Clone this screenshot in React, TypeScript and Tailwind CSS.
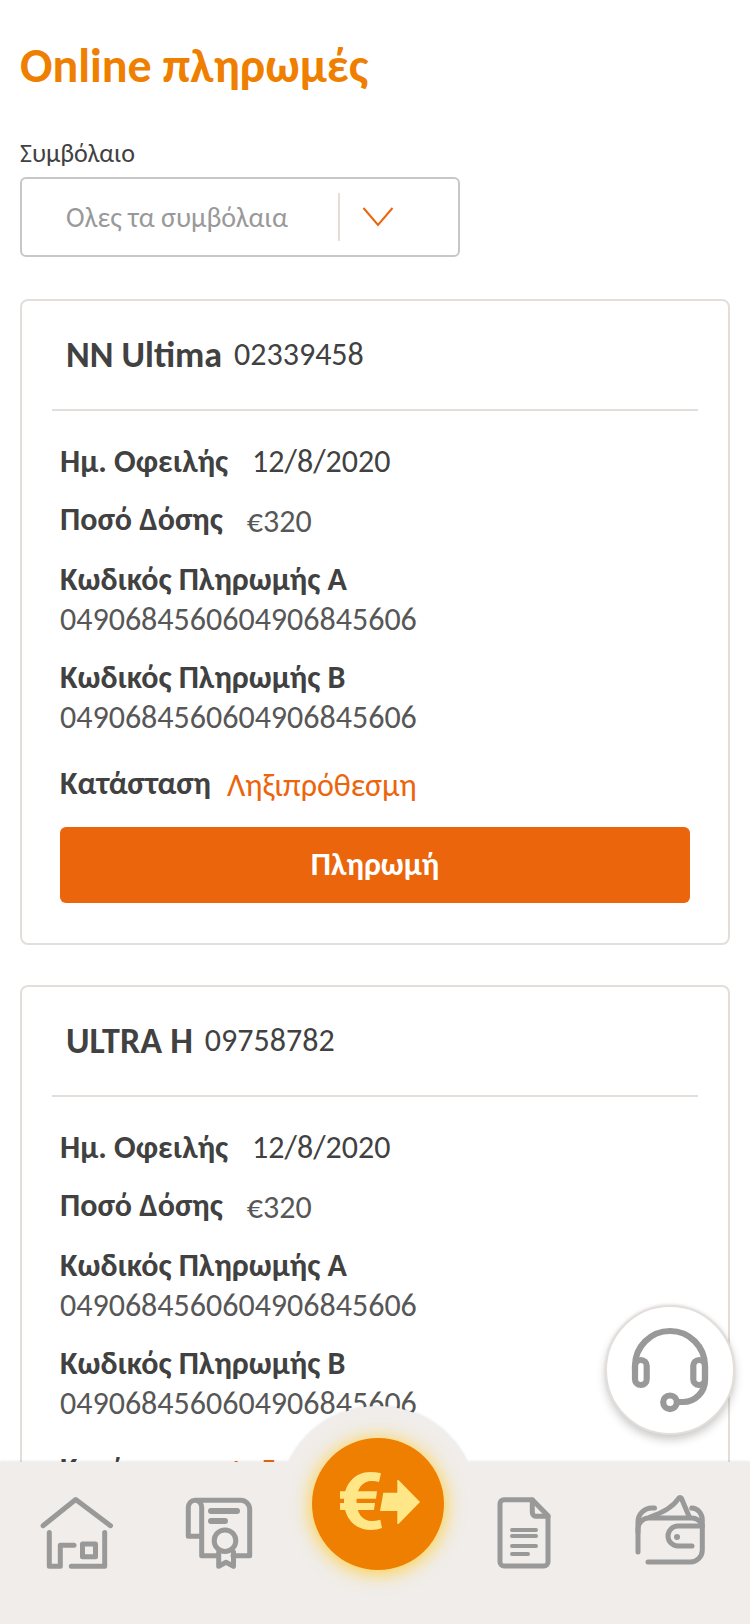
import React from "react";

type Policy = { name: string; number: string; due: string; amount: string; codeA: string; codeB: string; status: string };

const policies: Policy[] = [
  {
    name: "NN Ultima",
    number: "02339458",
    due: "12/8/2020",
    amount: "€320",
    codeA: "0490684560604906845606",
    codeB: "0490684560604906845606",
    status: "Ληξιπρόθεσμη",
  },
  {
    name: "ULTRA H",
    number: "09758782",
    due: "12/8/2020",
    amount: "€320",
    codeA: "0490684560604906845606",
    codeB: "0490684560604906845606",
    status: "Ληξιπρόθεσμη",
  },
];

function PolicyCard({ policy }: { policy: Policy }) {
  return (
    <article className="rounded-lg border-2 border-[#e3deda] bg-white px-[30px] pb-10">
      <header className="flex items-center gap-3 border-b-2 border-[#e3deda] px-3.5 py-8">
        <h2 className="text-[36px] leading-[44px] font-bold">{policy.name}</h2>
        <span className="text-[32px] leading-10">{policy.number}</span>
      </header>
      <div className="px-2">
        <dl className="flex flex-col gap-[18px] pt-[31px] text-[32px] leading-10">
          <div className="flex items-start gap-6">
            <dt className="font-bold">Ημ. Οφειλής</dt>
            <dd>{policy.due}</dd>
          </div>
          <div className="flex items-start gap-6">
            <dt className="font-bold">Ποσό Δόσης</dt>
            <dd className="pt-0.5 text-[#575757]">{policy.amount}</dd>
          </div>
          <div>
            <dt className="font-bold">Κωδικός Πληρωμής Α</dt>
            <dd className="text-[#575757]">{policy.codeA}</dd>
          </div>
          <div>
            <dt className="font-bold">Κωδικός Πληρωμής Β</dt>
            <dd className="text-[#575757]">{policy.codeB}</dd>
          </div>
          <div className="flex items-start gap-4 pt-2">
            <dt className="font-bold">Κατάσταση</dt>
            <dd className="pt-0.5 text-[#eb650d]">{policy.status}</dd>
          </div>
        </dl>
        <button type="button" className="mt-[21px] h-[76px] w-full rounded-md bg-[#eb650d] text-[32px] leading-10 font-bold text-white">
          Πληρωμή
        </button>
      </div>
    </article>
  );
}

const line = {
  fill: "none",
  stroke: "currentColor",
  strokeLinecap: "round" as const,
  strokeLinejoin: "round" as const,
  strokeWidth: 5,
};

function HomeIcon() {
  return (
    <svg viewBox="0 0 80 80" className="size-20" aria-hidden="true" {...line}>
      <path d="M6 33.7 38.7 7.5l34.8 26.2" />
      <path d="M37 53.3H23.3v21h-11V40.5M34.3 74.3h33.4V40.5" />
      <path d="M45.5 52h13v12.7h-13z" />
    </svg>
  );
}

function CertificateIcon() {
  return (
    <svg viewBox="0 0 80 80" className="size-20" aria-hidden="true" {...line}>
      <path d="M22.7 44.3H9.3V15.5a6.7 7.2 0 0 1 13.4 0v48.2H39M54 63.7h16.7V17.3a9 9 0 0 0-9-9H16" />
      <path d="M32 19h26M32 29h14" strokeWidth="6" />
      <circle cx="46" cy="48.7" r="10.8" />
      <path d="M39.7 60v14.3l7.3-4 7.5 4V60" />
    </svg>
  );
}

function DocumentIcon() {
  return (
    <svg viewBox="0 0 80 80" className="size-20" aria-hidden="true" {...line}>
      <path d="M20 7.7h28.3L64 23.7V70a4 4 0 0 1-4 4H20a4 4 0 0 1-4-4V11.7a4 4 0 0 1 4-4z" />
      <path d="M48.3 8v12.3a4 4 0 0 0 4 4H64" />
      <path d="M28 38h24M28 44h24M28 54h24M28 62h16" strokeWidth="4" />
    </svg>
  );
}

function WalletIcon() {
  return (
    <svg viewBox="0 0 80 80" className="size-20" aria-hidden="true" {...line}>
      <path d="M8 60V37a11 11 0 0 1 11-11h42a11 11 0 0 1 11.3 8" />
      <path d="M8 40V30a14 14 0 0 1 14-14h2.5M61.7 16a11 12 0 0 1 10.6 12v30a12 12 0 0 1-12 12H18" />
      <path d="M20 25C32 21 43 15 48.5 6.5q1.5-2 3 0L59.3 25" />
      <path d="M72 34H48a10 10 0 0 0 0 20h14" />
      <circle cx="47" cy="45" r="3" fill="currentColor" stroke="none" />
    </svg>
  );
}

function PayIcon() {
  return (
    <svg viewBox="0 0 132 132" className="size-full" fill="currentColor" aria-hidden="true">
      <path d="M69 35.3Q64 34 58 34C43 34 32 46 32 63s11 29 27 29q6 0 11-2l-1.7-8.3Q64 83 60 83c-10 0-15.5-8-15.500-20S50 43 60 43q4 0 7 1z" />
      <path d="M28 53.3h37l-1 7.4H28zM28 65h35l-1 7H28z" />
      <path d="M71.3 54.7h14V42h1.2L108 64 86.5 86h-1.2V73H68z" />
    </svg>
  );
}

function HeadsetIcon() {
  return (
    <svg viewBox="0 0 84 88" className="h-[88px] w-[84px]" aria-hidden="true" {...line} strokeWidth={6.2}>
      <path d="M7 44v-4a35 35 0 0 1 70 0v14a22 22 0 0 1-22 22h-6" />
      <rect x="7" y="34" width="11.7" height="25" rx="5.8" />
      <rect x="65.3" y="34" width="11.7" height="25" rx="5.8" />
      <circle cx="42" cy="76.3" r="6.8" fill="#fff" />
    </svg>
  );
}

export default function App() {
  return (
    <div className="flex h-screen flex-col overflow-hidden bg-white font-[Calibri,Carlito,Lato,sans-serif] text-[#414141]">
      <main className="min-h-0 flex-1 overflow-y-auto px-5 pt-9 pb-24 [scrollbar-width:none]">
        <h1 className="text-[48px] leading-[60px] font-bold text-[#ef7f00]">Online πληρωμές</h1>
        <label htmlFor="policy" className="mt-[41px] block text-[26px] leading-8">
          Συμβόλαιο
        </label>
        <div className="relative mt-2 w-[440px] max-w-full">
          <select
            id="policy"
            className="h-20 w-full appearance-none rounded-md border-2 border-[#c7c7c7] bg-white pt-0.5 pl-11 text-[28px] text-[#999999]"
          >
            <option>Ολες τα συμβόλαια</option>
          </select>
          <div className="pointer-events-none absolute inset-y-4 right-[66px] flex items-center gap-[22px]">
            <span className="h-full w-0.5 bg-[#e3deda]" />
            <svg viewBox="0 0 32 20" className="h-5 w-8" fill="none" stroke="#eb650d" strokeWidth="2" aria-hidden="true">
              <path d="M1.5 1 16 18 30.5 1" />
            </svg>
          </div>
        </div>
        <div className="mt-[42px] flex flex-col gap-10">
          {policies.map((p) => (
            <PolicyCard key={p.number} policy={p} />
          ))}
        </div>
      </main>

      <nav className="relative text-[#999999] drop-shadow-[0_-1px_1px_rgb(0_0_0/0.08)]">
        <span className="absolute -top-14 left-1/2 ml-[3px] size-[200px] -translate-x-1/2 rounded-full bg-[#f0edea]" />
        <ul className="relative grid h-[162px] grid-cols-[154fr_130fr_188fr_104fr_174fr] justify-items-center bg-[#f0edea] pt-[30px]">
          <li>
            <a href="#home" aria-label="Αρχική">
              <HomeIcon />
            </a>
          </li>
          <li>
            <a href="#policies" aria-label="Συμβόλαια">
              <CertificateIcon />
            </a>
          </li>
          <li className="-mt-[54px]">
            <a
              href="#payments"
              aria-label="Πληρωμές"
              className="block size-[132px] rounded-full bg-[#ef7f00] text-[#ffe687] shadow-[0_2px_18px_2px_#fcd04e]"
            >
              <PayIcon />
            </a>
          </li>
          <li>
            <a href="#documents" aria-label="Έγγραφα">
              <DocumentIcon />
            </a>
          </li>
          <li className="pl-3.5">
            <a href="#wallet" aria-label="Πορτοφόλι">
              <WalletIcon />
            </a>
          </li>
        </ul>
        <button
          type="button"
          aria-label="Υποστήριξη"
          className="absolute -top-[157px] right-[15px] flex size-[130px] items-center justify-center rounded-full border-2 border-[#e3deda] bg-white shadow-[0_5px_10px_rgb(0_0_0/0.2)]"
        >
          <HeadsetIcon />
        </button>
      </nav>
    </div>
  );
}
